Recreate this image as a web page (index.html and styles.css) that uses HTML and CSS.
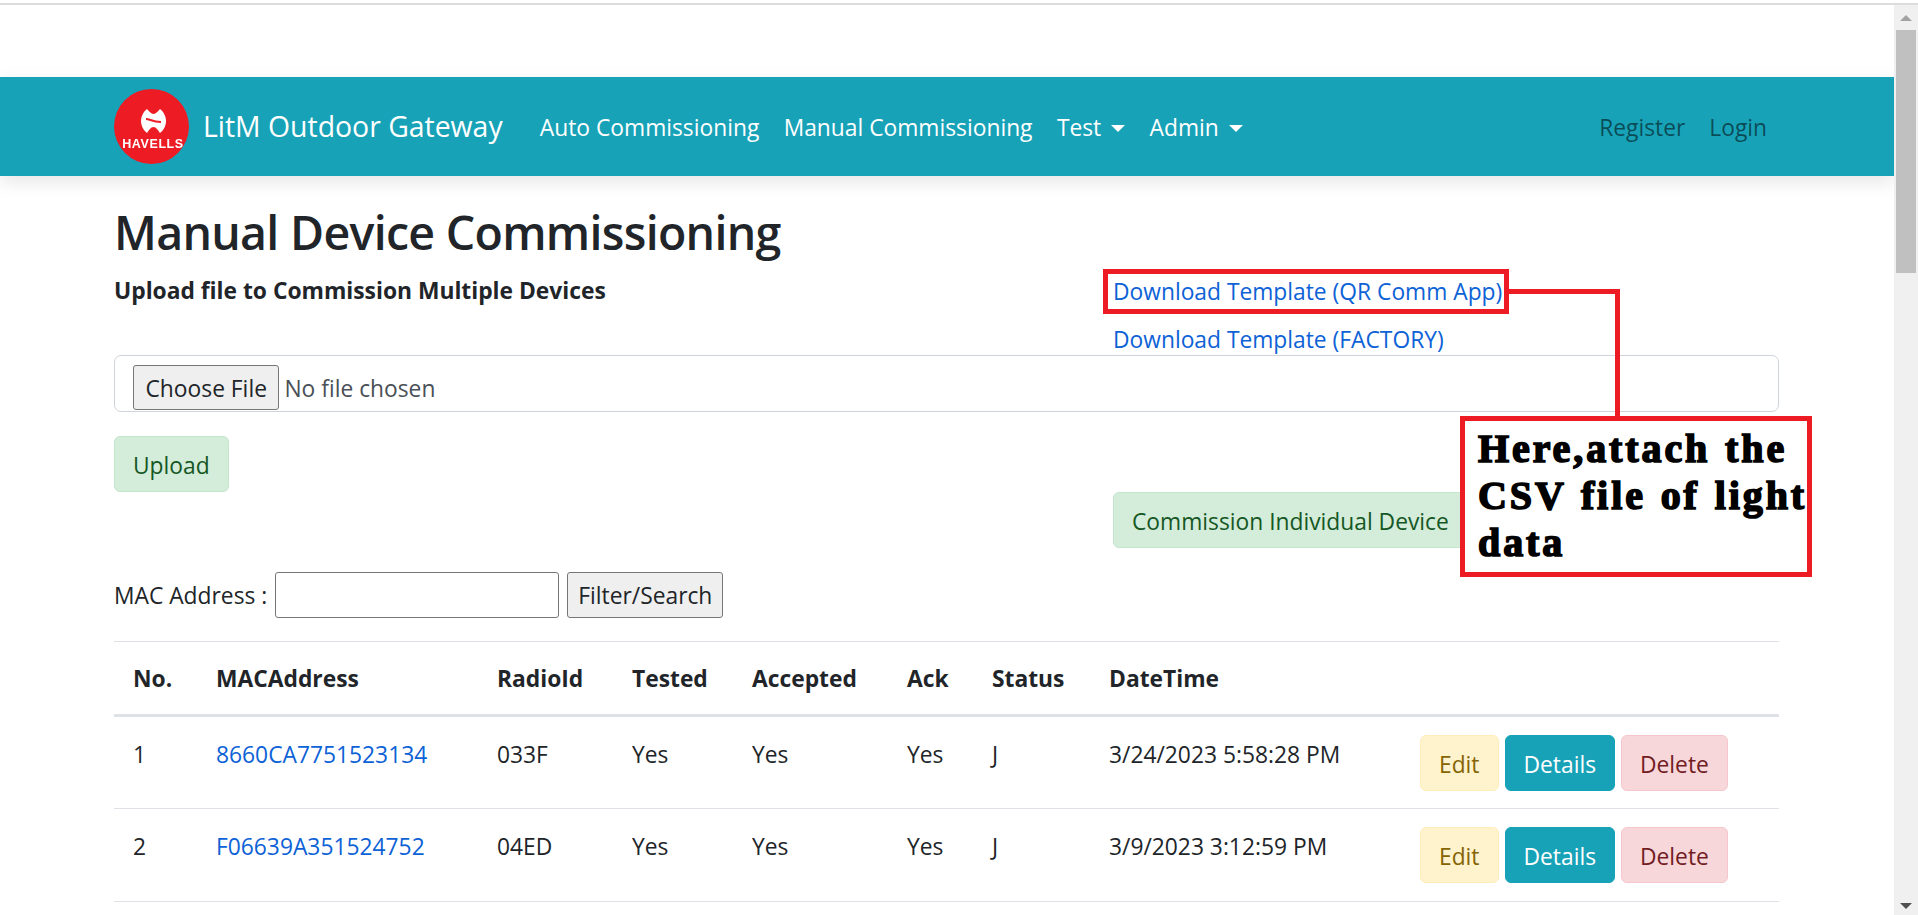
FILE: index.html
```html
<!DOCTYPE html>
<html lang="en">
<head>
    <meta charset="UTF-8">
    <title>Manual Device Commissioning</title>
    <link rel="stylesheet" href="styles.css">
</head>
<body>
    <div class="topline"></div>
    <div class="shell">
        <div class="page">
            <nav class="navbar">
                <div class="nav-inner">
                    <a class="brand" href="#">
                        <svg class="logo" viewBox="0 0 75 75" width="75" height="75">
                            <circle cx="37.5" cy="37.5" r="37.5" fill="#ed1c24"/>
                            <g class="logo-soft">
                                <path fill="#fff" d="M33 20C35 22 37 25 39.5 25C42 25 44 22 46 20C50 23 52 28 52 32C52 36 50 41 46 44C44 41 42 38 39.5 38C37 38 35 41 33 44C29 41 27 36 27 32C27 28 29 23 33 20Z"/>
                                <path fill="none" stroke="#ed1c24" stroke-width="2" d="M32 30C36 30 38 33 47 33"/>
                                <text class="logo-text" x="39" y="59" text-anchor="middle">HAVELLS</text>
                            </g>
                        </svg>
                        <span>LitM Outdoor Gateway</span>
                    </a>
                    <ul class="nav-links">
                        <li><a href="#">Auto Commissioning</a></li>
                        <li><a href="#">Manual Commissioning</a></li>
                        <li><a class="caret" href="#">Test</a></li>
                        <li><a class="caret" href="#">Admin</a></li>
                    </ul>
                    <ul class="nav-links nav-right">
                        <li><a href="#">Register</a></li>
                        <li><a href="#">Login</a></li>
                    </ul>
                </div>
            </nav>

            <div class="container">
                <h1>Manual Device Commissioning</h1>
                <div class="upload-head">
                    <h4>Upload file to Commission Multiple Devices</h4>
                    <div class="templates">
                        <a href="#">Download Template (QR Comm App)</a>
                        <a href="#">Download Template (FACTORY)</a>
                    </div>
                </div>
                <input class="file-box" type="file">
                <button class="btn btn-green upload-btn">Upload</button>
                <div class="individual">
                    <button class="btn btn-green">Commission Individual Device</button>
                </div>
                <div class="filter">
                    <label for="mac">MAC Address :</label>
                    <input id="mac" class="mac-input" type="text">
                    <button class="plain-btn">Filter/Search</button>
                </div>
                <table>
                    <thead>
                        <tr>
                            <th class="c-no">No.</th>
                            <th class="c-mac">MACAddress</th>
                            <th class="c-radio">RadioId</th>
                            <th class="c-tested">Tested</th>
                            <th class="c-acc">Accepted</th>
                            <th class="c-ack">Ack</th>
                            <th class="c-status">Status</th>
                            <th class="c-date">DateTime</th>
                            <th></th>
                        </tr>
                    </thead>
                    <tbody>
                        <tr>
                            <td>1</td>
                            <td><a href="#">8660CA7751523134</a></td>
                            <td>033F</td>
                            <td>Yes</td>
                            <td>Yes</td>
                            <td>Yes</td>
                            <td>J</td>
                            <td>3/24/2023 5:58:28 PM</td>
                            <td class="actions">
                                <button class="btn btn-edit">Edit</button>
                                <button class="btn btn-details">Details</button>
                                <button class="btn btn-delete">Delete</button>
                            </td>
                        </tr>
                        <tr>
                            <td>2</td>
                            <td><a href="#">F06639A351524752</a></td>
                            <td>04ED</td>
                            <td>Yes</td>
                            <td>Yes</td>
                            <td>Yes</td>
                            <td>J</td>
                            <td>3/9/2023 3:12:59 PM</td>
                            <td class="actions">
                                <button class="btn btn-edit">Edit</button>
                                <button class="btn btn-details">Details</button>
                                <button class="btn btn-delete">Delete</button>
                            </td>
                        </tr>
                    </tbody>
                </table>
            </div>
        </div>
        <div class="scrollbar">
            <span class="arrow-up"></span>
            <span class="thumb"></span>
            <span class="arrow-down"></span>
        </div>
    </div>

    <!-- red notes drawn on top of the screenshot -->
    <div class="mark mark-link"></div>
    <div class="mark line-h"></div>
    <div class="mark line-v"></div>
    <div class="mark note">Here,attach the CSV file of light data</div>
</body>
</html>
```

FILE: styles.css
```css
*{
    box-sizing: border-box;
}
html,body{
    height: 100%;
}
body{
    margin: 0;
    overflow: hidden;
    font-family: "Open Sans", "Liberation Sans", sans-serif;
    font-size: 22.8px;
    line-height: 28.8px;
    color: #212529;
    background: #fff;
}
a{
    text-decoration: none;
    color: #0d62d6;
}
ul{
    list-style: none;
    margin: 0;
    padding: 0;
}
.topline{
    height: 5px;
    border-top: 3px solid #fff;
    background: #dcdcdc;
}
.shell{
    display: flex;
    height: 910px;
}
.page{
    flex: 1;
    min-width: 0;
    padding-top: 72px;
}

/* navbar */
.navbar{
    height: 99px;
    padding: 0 114px;
    background: #17a2b8;
    box-shadow: 0 6px 18px rgba(0,0,0,.1);
}
.nav-inner{
    width: 1665px;
    height: 100%;
    display: flex;
    align-items: center;
}
.brand{
    display: flex;
    align-items: center;
    gap: 14px;
    color: #fff;
    font-size: 28.4px;
    margin-right: 25px;
}
.logo{
    display: block;
}
.logo-soft{
    filter: blur(.5px);
}
.logo-text{
    font-family: "Liberation Sans", sans-serif;
    font-size: 12.5px;
    font-weight: 700;
    fill: #fff;
    letter-spacing: .6px;
}
.nav-links{
    display: flex;
    padding-top: 4px;
}
.nav-links a{
    display: block;
    padding: 0 12.2px;
    color: #fff;
}
.nav-right{
    margin-left: auto;
    margin-right: 0;
}
.nav-right a{
    padding: 0 12px;
    color: rgba(0,0,0,.55);
}
.caret::after{
    content: "";
    display: inline-block;
    margin-left: 10px;
    vertical-align: 4px;
    border-top: 7px solid #fff;
    border-left: 7px solid transparent;
    border-right: 7px solid transparent;
}

/* content */
.container{
    width: 1665px;
    margin-left: 114px;
    padding-top: 27px;
}
h1{
    margin: 0;
    font-size: 46.5px;
    line-height: 58px;
    font-weight: 600;
    letter-spacing: -.7px;
}
.upload-head{
    display: grid;
    grid-template-columns: 999px 1fr;
    margin-top: 16px;
}
h4{
    margin: 0;
    font-size: 22.8px;
    font-weight: 700;
}
.templates{
    display: flex;
    flex-direction: column;
    gap: 19px;
}
.templates a{
    line-height: 29px;
}
.file-box{
    display: block;
    width: 100%;
    height: 57px;
    margin-top: 1px;
    padding: 9px 18px 0;
    border: 1px solid #ced4da;
    border-radius: 7px;
    font: inherit;
    color: #495057;
}
.file-box::file-selector-button{
    height: 45px;
    margin-right: 5px;
    padding: 3px 11.5px 0;
    font: inherit;
    color: #212529;
    background: #efefef;
    border: 1px solid #767676;
    border-radius: 3px;
}
.btn{
    height: 56px;
    padding: 4px 18px 0;
    font: inherit;
    border: 1px solid transparent;
    border-radius: 6px;
}
.btn-green{
    color: #155724;
    background: #d4edda;
    border-color: #c3e6cb;
}
.upload-btn{
    display: block;
    margin-top: 24px;
}
.individual{
    padding-left: 999px;
}
.filter{
    display: flex;
    align-items: center;
    gap: 8px;
    height: 46px;
    margin-top: 24px;
}
.filter label{
    padding-top: 2px;
}
.mac-input{
    width: 284px;
    height: 46px;
    border: 1px solid #767676;
    border-radius: 3px;
}
.plain-btn{
    height: 46px;
    padding: 2px 10px 0;
    font: inherit;
    color: #212529;
    background: #efefef;
    border: 1px solid #767676;
    border-radius: 3px;
}

/* table */
table{
    width: 100%;
    margin-top: 23px;
    border-collapse: collapse;
    table-layout: fixed;
}
th{
    height: 74px;
    padding: 2px 19px 0;
    text-align: left;
    font-weight: 700;
    border-top: 1px solid #dee2e6;
    border-bottom: 3px solid #dee2e6;
}
td{
    height: 93px;
    padding: 24px 19px 0;
    vertical-align: top;
    border-bottom: 1px solid #dee2e6;
}
.c-no{ width: 83px; }
.c-mac{ width: 281px; }
.c-radio{ width: 135px; }
.c-tested{ width: 120px; }
.c-acc{ width: 155px; }
.c-ack{ width: 85px; }
.c-status{ width: 117px; }
.c-date{ width: 311px; }
td.actions{
    padding-top: 18px;
    white-space: nowrap;
    font-size: 0;
}
.actions .btn{
    font-size: 22.8px;
    margin-right: 6px;
}
.btn-edit{
    color: #856404;
    background: #fff3cd;
    border-color: #ffeeba;
}
.btn-details{
    color: #fff;
    background: #17a2b8;
    border-color: #17a2b8;
}
.btn-delete{
    color: #721c24;
    background: #f8d7da;
    border-color: #f5c6cb;
}

/* fake browser scrollbar */
.scrollbar{
    position: relative;
    width: 24px;
    background: #f0f0f0;
}
.thumb{
    position: absolute;
    left: 2px;
    top: 25px;
    width: 20px;
    height: 243px;
    background: #c0c0c0;
}
.arrow-up,.arrow-down{
    position: absolute;
    left: 6px;
    width: 0;
    height: 0;
    border-left: 6px solid transparent;
    border-right: 6px solid transparent;
}
.arrow-up{
    top: 10px;
    border-bottom: 6px solid #a3a3a3;
}
.arrow-down{
    bottom: 6px;
    border-top: 6px solid #505050;
}

/* annotations */
.mark{
    position: absolute;
}
.mark-link{
    left: 1103px;
    top: 269px;
    width: 406px;
    height: 45px;
    border: 5px solid #ed1c24;
}
.line-h{
    left: 1509px;
    top: 289px;
    width: 111px;
    height: 5px;
    background: #ed1c24;
}
.line-v{
    left: 1615px;
    top: 289px;
    width: 5px;
    height: 127px;
    background: #ed1c24;
}
.note{
    left: 1460px;
    top: 416px;
    width: 352px;
    height: 161px;
    padding: 4px 0 0 13px;
    background: #fff;
    border: 5px solid #ed1c24;
    font-family: "Liberation Serif", serif;
    font-size: 40px;
    line-height: 47px;
    font-weight: 700;
    color: #000;
    -webkit-text-stroke: 1.6px #000;
    letter-spacing: 2.9px;
    word-spacing: 2px;
}
```
